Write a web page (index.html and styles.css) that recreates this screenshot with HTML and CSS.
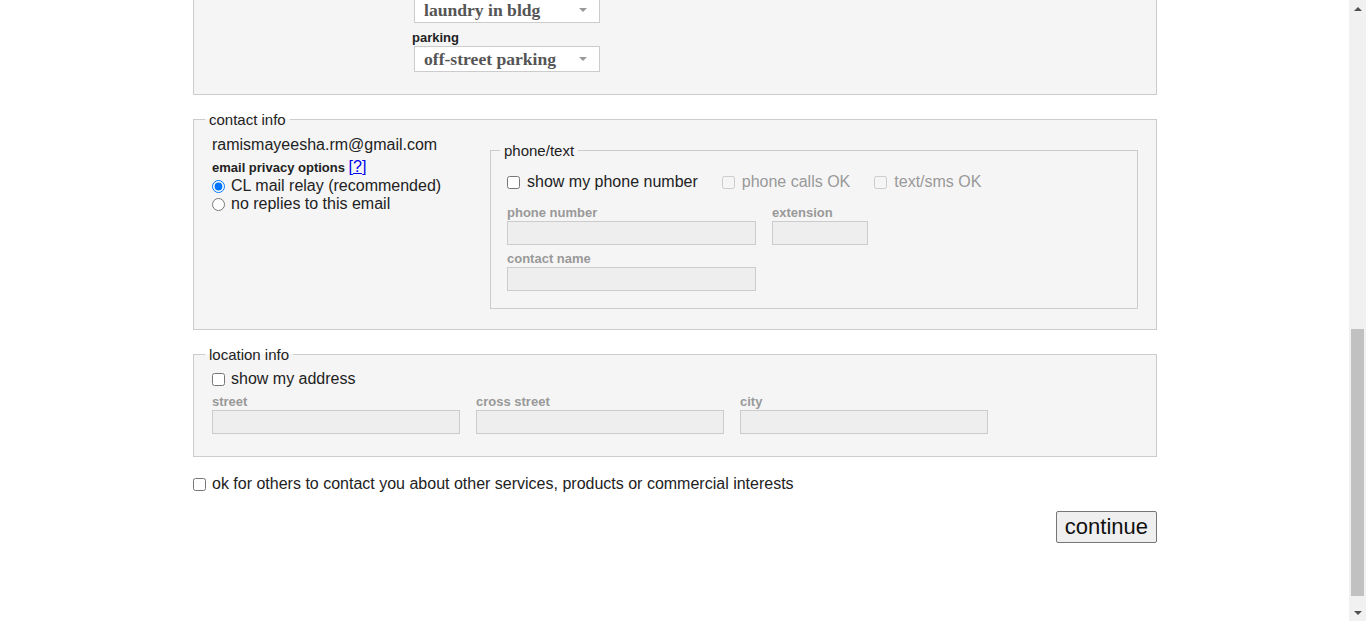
FILE: index.html
```html
<!DOCTYPE html>
<html lang="en">
<head>
<meta charset="utf-8">
<title>posting form</title>
<link rel="stylesheet" href="styles.css">
</head>
<body>
<div class="page">
  <main class="viewport">
    <form class="form">
      <fieldset class="box box-cut">
        <div class="attrs">
          <div class="sel sel-first"><select><option>laundry in bldg</option></select></div>
          <label class="attr-label">parking</label>
          <div class="sel"><select><option>off-street parking</option></select></div>
        </div>
      </fieldset>

      <fieldset class="box contact">
        <legend>contact info</legend>
        <div class="contact-cols">
          <div class="email-col">
            <div class="email">ramismayeesha.rm@gmail.com</div>
            <div class="privacy">email privacy options <span class="help">[<a href="#">?</a>]</span></div>
            <label class="opt"><input type="radio" name="privacy" checked>CL mail relay (recommended)</label>
            <label class="opt"><input type="radio" name="privacy">no replies to this email</label>
          </div>
          <fieldset class="box phone">
            <legend>phone/text</legend>
            <div class="checks">
              <label class="chk"><input type="checkbox">show my phone number</label>
              <label class="chk off"><input type="checkbox" disabled>phone calls OK</label>
              <label class="chk off"><input type="checkbox" disabled>text/sms OK</label>
            </div>
            <div class="fields">
              <div class="field"><label>phone number</label><input class="w-wide" disabled></div>
              <div class="field"><label>extension</label><input class="w-ext" disabled></div>
            </div>
            <div class="fields fields-next">
              <div class="field"><label>contact name</label><input class="w-wide" disabled></div>
            </div>
          </fieldset>
        </div>
      </fieldset>

      <fieldset class="box location">
        <legend>location info</legend>
        <label class="opt"><input type="checkbox">show my address</label>
        <div class="fields fields-loc">
          <div class="field"><label>street</label><input class="w-loc" disabled></div>
          <div class="field"><label>cross street</label><input class="w-loc" disabled></div>
          <div class="field"><label>city</label><input class="w-loc" disabled></div>
        </div>
      </fieldset>

      <label class="opt commercial"><input type="checkbox">ok for others to contact you about other services, products or commercial interests</label>

      <div class="actions">
        <button type="button" class="continue">continue</button>
      </div>
    </form>
  </main>
  <div class="scrollbar" aria-hidden="true">
    <div class="sb-btn sb-up"></div>
    <div class="sb-track"><div class="sb-thumb"></div></div>
    <div class="sb-btn sb-down"></div>
  </div>
</div>
</body>
</html>
```

FILE: styles.css
```css
html, body {
  margin: 0;
  height: 100%;
}

body {
  font-family: "Liberation Sans", Arial, sans-serif;
  font-size: 16px;
  color: #222;
  background: #fff;
  overflow: hidden;
}

.page {
  display: flex;
  height: 621px;
}

.viewport {
  flex: 1;
  min-width: 0;
  overflow: hidden;
  padding-left: 1px;
}

.form {
  width: 964px;
  margin: 0 auto;
}

/* fieldsets */
.box {
  margin: 0;
  min-width: 0;
  border: 1px solid #ccc;
  background: #f5f5f5;
  padding: 7px 18px 20px;
}

.box legend {
  font-size: 15px;
  line-height: 17px;
  padding: 0 4px;
  margin-left: -7px;
  color: #222;
}

.box-cut {
  border-top: none;
  padding: 0 18px 22px;
}

.attrs {
  margin-left: 200px;
}

.sel {
  position: relative;
  width: 186px;
  margin-left: 2px;
}

.sel-first {
  margin-top: -3px;
}

.sel select {
  -webkit-appearance: none;
  appearance: none;
  display: block;
  box-sizing: border-box;
  width: 186px;
  height: 26px;
  border: 1px solid #ccc;
  border-radius: 0;
  background: #fff;
  font-family: "Liberation Serif", "Times New Roman", serif;
  font-weight: bold;
  font-size: 17.6px;
  color: #555;
  padding: 0 0 0 9px;
  outline: none;
}

.sel::after {
  content: "";
  position: absolute;
  right: 13px;
  top: 11px;
  border-left: 4px solid transparent;
  border-right: 4px solid transparent;
  border-top: 4px solid #999;
}

.attr-label {
  display: block;
  font-size: 13px;
  font-weight: bold;
  line-height: 15px;
  margin: 7px 0 1px;
  color: #222;
}

/* contact info */
.contact,
.location {
  margin-top: 16px;
}

.contact-cols {
  display: flex;
  align-items: flex-start;
}

.email-col {
  flex: none;
  width: 278px;
  line-height: 18px;
}

.email {
  margin-top: 1px;
}

.privacy {
  margin-top: 5px;
  font-size: 13px;
  font-weight: bold;
  line-height: 18px;
  height: 18px;
}

.help {
  font-size: 16px;
  font-weight: normal;
  line-height: 16px;
  color: #00e;
}

.help a {
  color: #00e;
}

.opt {
  display: flex;
  align-items: center;
  gap: 6px;
  line-height: 18px;
}

.opt input,
.chk input {
  margin: 0;
  flex: none;
}

.phone {
  flex: 1;
  margin-top: 7px;
  padding: 13px 16px 17px;
  background: transparent;
}

.checks {
  display: flex;
  gap: 24px;
  line-height: 20px;
}

.chk {
  display: flex;
  align-items: center;
  gap: 7px;
}

.chk.off {
  color: #999;
}

.fields {
  display: flex;
  gap: 16px;
  margin-top: 13px;
}

.fields-next,
.fields-loc {
  margin-top: 6px;
}

.field label {
  display: block;
  font-size: 13px;
  font-weight: bold;
  line-height: 15px;
  color: #999;
  margin-bottom: 1px;
}

.field input {
  display: block;
  box-sizing: border-box;
  height: 24px;
  margin: 0;
  padding: 0;
  border: 1px solid #ccc;
  border-radius: 0;
  background: #eee;
}

.w-wide { width: 249px; }
.w-ext { width: 96px; }
.w-loc { width: 248px; }

.location {
  padding-bottom: 22px;
}

.commercial {
  margin-top: 18px;
}

.actions {
  display: flex;
  justify-content: flex-end;
  margin-top: 18px;
}

.continue {
  box-sizing: border-box;
  height: 32px;
  padding: 0 8px;
  font-family: "Liberation Sans", Arial, sans-serif;
  font-size: 22px;
  color: #111;
  background: #efefef;
  border: 1px solid #767676;
  border-radius: 2px;
}

/* scrollbar */
.scrollbar {
  flex: none;
  width: 17px;
  background: #f1f1f1;
  display: flex;
  flex-direction: column;
}

.sb-btn {
  height: 17px;
  flex: none;
  display: flex;
  align-items: center;
  justify-content: center;
}

.sb-up::before {
  content: "";
  border-left: 4px solid transparent;
  border-right: 4px solid transparent;
  border-bottom: 4px solid #505050;
}

.sb-down::before {
  content: "";
  border-left: 4px solid transparent;
  border-right: 4px solid transparent;
  border-top: 4px solid #505050;
}

.sb-track {
  flex: 1;
  padding-top: 312px;
}

.sb-thumb {
  height: 267px;
  margin: 0 2px;
  background: #c1c1c1;
}
```
